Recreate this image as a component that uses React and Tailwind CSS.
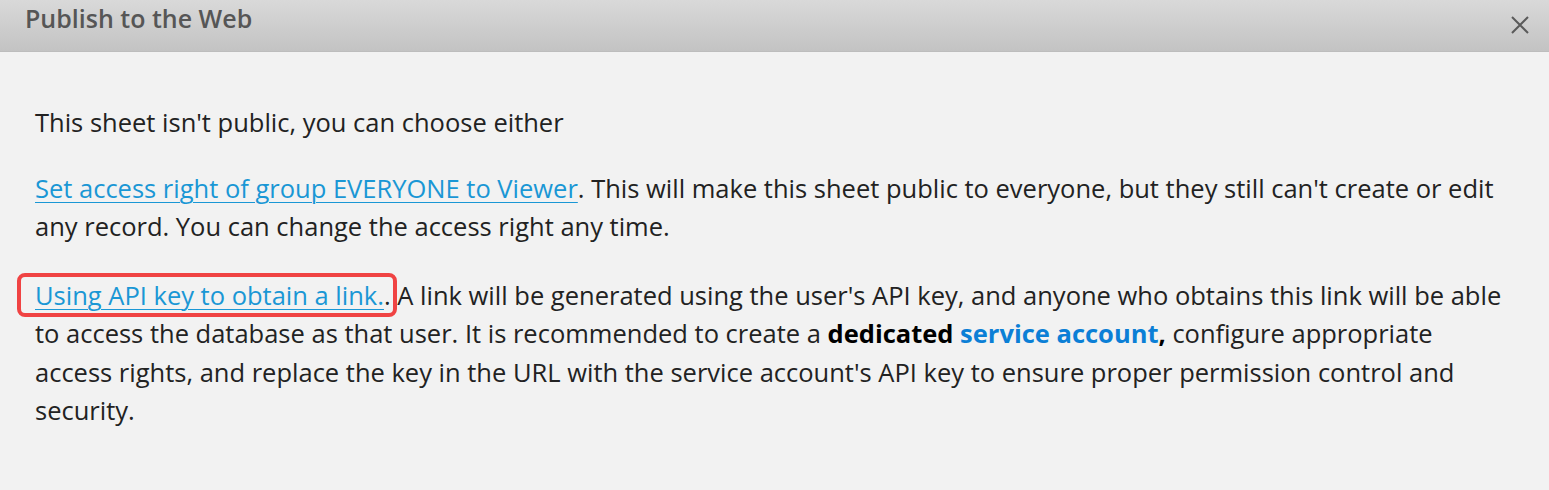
import React from "react";

export default function App() {
  return (
    <div
      className="w-[1549px] h-[490px] bg-[#f2f2f2] overflow-hidden"
      style={{ fontFamily: '"Open Sans", "Noto Sans", sans-serif' }}
    >
      <div className="h-[52px] flex items-center justify-between pl-[25px] pr-[18px] bg-gradient-to-b from-[#d9d9d9] to-[#c3c3c3] border-b border-[#bdbdbd]">
        <h1 className="text-[25px] font-semibold text-[#565656] -mt-[13px]">Publish to the Web</h1>
        <button className="-mt-[2px]">
          <svg width="22" height="22" viewBox="0 0 22 22" fill="none" stroke="#5a5a5a" strokeWidth="2">
            <path d="M3 3 L19 19 M19 3 L3 19" />
          </svg>
        </button>
      </div>

      <div className="pl-[35px] pr-[40px] pt-[51px] text-[25.5px] leading-[38.5px] text-[#222]">
        <p>This sheet isn't public, you can choose either</p>

        <p className="mt-[27px]">
          <a href="#" className="text-[#1a97d5] underline underline-offset-[4px] decoration-1">
            Set access right of group EVERYONE to Viewer
          </a>
          . This will make this sheet public to everyone, but they still can't create or edit any record. You can change the access right any time.
        </p>

        <p className="mt-[30px]">
          <span className="relative">
            <span className="absolute -left-[18px] -right-[6px] -top-[5px] -bottom-[5px] border-[4px] border-[#f04343] rounded-[8px]"></span>
            <a href="#" className="text-[#1a97d5] underline underline-offset-[4px] decoration-1">
              Using API key to obtain a link.
            </a>
            .
          </span>{" "}
          A link will be generated using the user's API key, and anyone who obtains this link will be able to access the database as that user. It is recommended to create a{" "}
          <b className="font-bold text-black">dedicated</b>{" "}
          <b className="font-bold text-[#0b7fd6]">service account</b>
          <b className="font-bold text-black">,</b> configure appropriate access rights, and replace the key in the URL with the service account's API key to ensure proper permission control and security.
        </p>
      </div>
    </div>
  );
}
